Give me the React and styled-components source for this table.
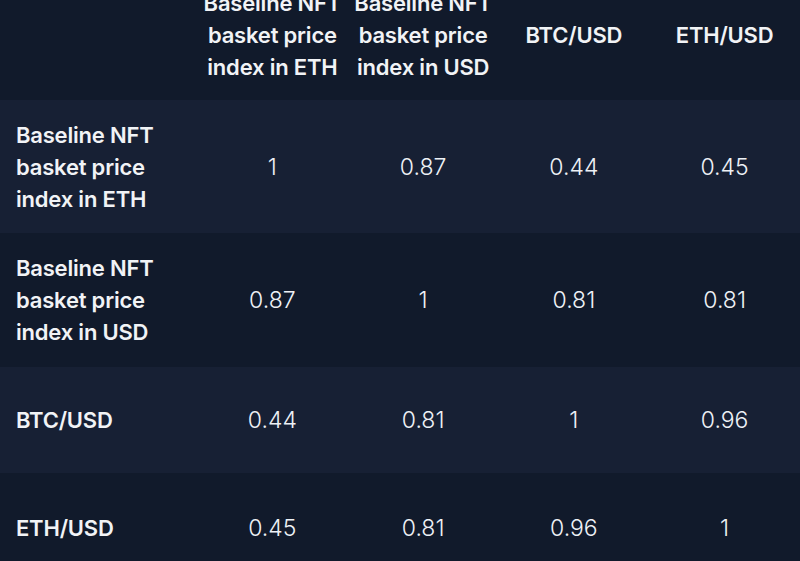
import React from "react";
import styled, { createGlobalStyle } from "styled-components";

const Global = createGlobalStyle`
  html, body { margin: 0; padding: 0; background: #111a2b; overflow: hidden; }
  body { font-family: Inter, "Noto Sans", sans-serif; color: #f1f3f6; }
`;

const Table = styled.div`
  width: 800px;
  margin-top: -30px;
  display: grid;
  grid-template-columns: 197px repeat(4, 1fr);
`;

const Row = styled.div`
  display: contents;
`;

const Cell = styled.div`
  background: ${(p) => (p.$alt ? "#172034" : "#111a2b")};
  height: ${(p) => p.$h}px;
  display: flex;
  align-items: center;
  justify-content: ${(p) => (p.$left ? "flex-start" : "center")};
  text-align: ${(p) => (p.$left ? "left" : "center")};
  padding: ${(p) => (p.$left ? "0 16px" : "0")};
  box-sizing: border-box;
  white-space: nowrap;
`;

const HeadText = styled.span`
  font-size: 22px;
  font-weight: 600;
  line-height: 32px;
  letter-spacing: -0.2px;
`;

const Num = styled.span`
  font-size: 23px;
  font-weight: 300;
  line-height: 32px;
  color: #eef1f6;
`;

const labels = [
  ["Baseline NFT", "basket price", "index in ETH"],
  ["Baseline NFT", "basket price", "index in USD"],
  ["BTC/USD"],
  ["ETH/USD"],
];

const data = [
  ["1", "0.87", "0.44", "0.45"],
  ["0.87", "1", "0.81", "0.81"],
  ["0.44", "0.81", "1", "0.96"],
  ["0.45", "0.81", "0.96", "1"],
];

const heights = [133, 134, 106, 110];

const Lines = ({ lines }) =>
  lines.map((l, i) => (
    <React.Fragment key={i}>
      {l}
      {i < lines.length - 1 && <br />}
    </React.Fragment>
  ));

export default function App() {
  return (
    <>
      <Global />
      <Table>
        <Row>
          <Cell $h={130} $left />
          {labels.map((l, i) => (
            <Cell key={i} $h={130}>
              <HeadText>
                <Lines lines={l} />
              </HeadText>
            </Cell>
          ))}
        </Row>
        {data.map((r, ri) => (
          <Row key={ri}>
            <Cell $h={heights[ri]} $left $alt={ri % 2 === 0}>
              <HeadText>
                <Lines lines={labels[ri]} />
              </HeadText>
            </Cell>
            {r.map((v, ci) => (
              <Cell key={ci} $h={heights[ri]} $alt={ri % 2 === 0}>
                <Num>{v}</Num>
              </Cell>
            ))}
          </Row>
        ))}
      </Table>
    </>
  );
}
